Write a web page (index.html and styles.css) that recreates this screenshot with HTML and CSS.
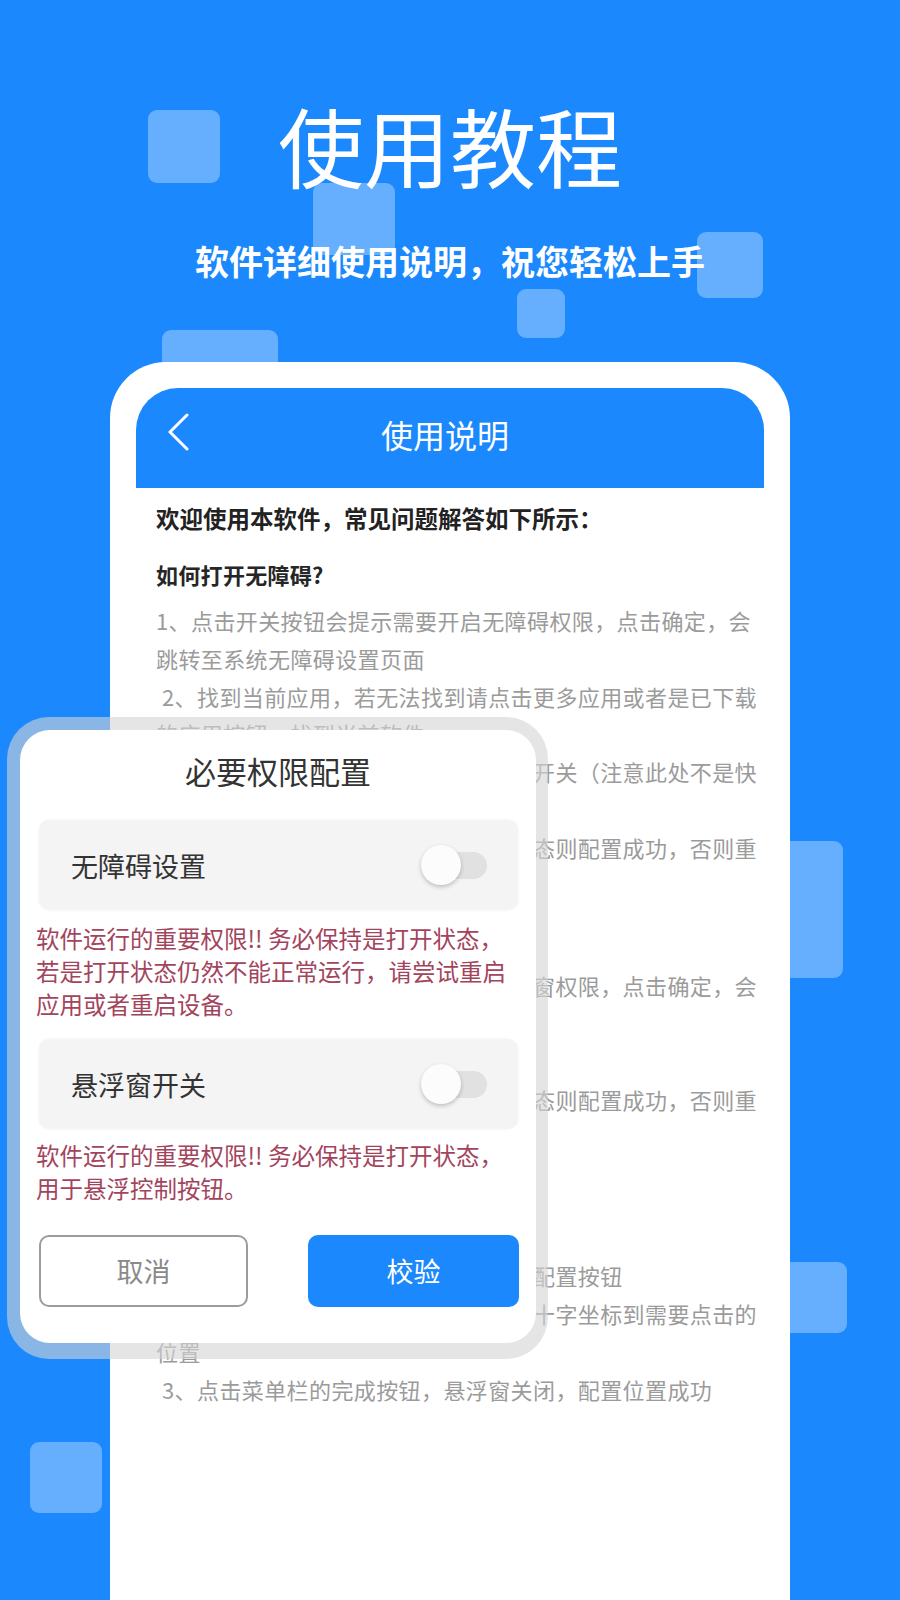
FILE: index.html
```html
<!DOCTYPE html>
<html lang="zh-CN">
<head>
<meta charset="utf-8">
<title>使用教程</title>
<link rel="stylesheet" href="styles.css">
</head>
<body>
<div class="page">
  <div class="deco d1"></div>
  <div class="deco d2"></div>
  <div class="deco d3"></div>
  <div class="deco d4"></div>
  <div class="deco d5"></div>
  <div class="deco d6"></div>
  <div class="deco d7"></div>
  <div class="deco d8"></div>

  <header class="hero">
    <h1 class="hero-title">使用教程</h1>
    <p class="hero-sub">软件详细使用说明，祝您轻松上手</p>
  </header>

  <section class="phone">
    <div class="bar">
      <svg class="back" viewBox="0 0 22 38" width="22" height="38" aria-hidden="true">
        <path d="M20 2 L3 19 L20 36" fill="none" stroke="#fff" stroke-width="3" stroke-linecap="round" stroke-linejoin="round"/>
      </svg>
      <h2 class="bar-title">使用说明</h2>
      <span></span>
    </div>
    <div class="doc">
      <p class="intro">欢迎使用本软件，常见问题解答如下所示：</p>

      <h3 class="q">如何打开无障碍?</h3>
      <p class="step first">1、点击开关按钮会提示需要开启无障碍权限，点击确定，会跳转至系统无障碍设置页面</p>
      <p class="step">2、找到当前应用，若无法找到请点击更多应用或者是已下载的应用按钮，找到当前软件</p>
      <p class="step">3、点击进入后，点击打开无障碍服务开关（注意此处不是快捷方式开关）</p>
      <p class="step">4、返回应用查看开关，如果是打开状态则配置成功，否则重新配置</p>

      <h3 class="q">如何打开悬浮窗?</h3>
      <p class="step">1、点击开关按钮会提示需要开启悬浮窗权限，点击确定，会跳转至系统悬浮窗设置页面</p>
      <p class="step">2、找到当前应用，打开开关</p>
      <p class="step">3、返回应用查看开关，如果是打开状态则配置成功，否则重新配置</p>
      <p class="step">4、若仍无法使用，请重启应用</p>

      <h3 class="q">如何配置点击位置?</h3>
      <p class="step">1、打开悬浮窗开关后，点击菜单栏的配置按钮</p>
      <p class="step">2、长按并拖动屏幕上出现的悬浮窗的十字坐标到需要点击的位置</p>
      <p class="step">3、点击菜单栏的完成按钮，悬浮窗关闭，配置位置成功</p>
    </div>
  </section>

  <div class="dialog">
    <div class="panel">
      <h2 class="dlg-title">必要权限配置</h2>

      <div class="perm">
        <span class="perm-name">无障碍设置</span>
        <span class="toggle"></span>
      </div>
      <p class="warn">软件运行的重要权限!! 务必保持是打开状态，若是打开状态仍然不能正常运行，请尝试重启应用或者重启设备。</p>

      <div class="perm perm-2">
        <span class="perm-name">悬浮窗开关</span>
        <span class="toggle"></span>
      </div>
      <p class="warn warn-2">软件运行的重要权限!! 务必保持是打开状态，用于悬浮控制按钮。</p>

      <div class="actions">
        <button class="btn btn-cancel" type="button">取消</button>
        <button class="btn btn-ok" type="button">校验</button>
      </div>
    </div>
  </div>
</div>
</body>
</html>
```

FILE: styles.css
```css
html, body {
  margin: 0;
  padding: 0;
}

.page {
  position: relative;
  width: 900px;
  height: 1600px;
  overflow: hidden;
  background: #1b89fd;
  font-family: "Noto Sans CJK SC", "Noto Sans", sans-serif;
}

/* decorative translucent squares */
.deco {
  position: absolute;
  background: #66aefe;
  border-radius: 9px;
}
.d1 { left: 148px; top: 110px; width: 72px; height: 73px; }
.d2 { left: 313px; top: 183px; width: 82px; height: 72px; }
.d3 { left: 697px; top: 232px; width: 66px; height: 66px; }
.d4 { left: 517px; top: 289px; width: 48px; height: 49px; }
.d5 { left: 162px; top: 330px; width: 116px; height: 60px; }
.d6 { left: 760px; top: 841px; width: 83px; height: 137px; }
.d7 { left: 760px; top: 1262px; width: 87px; height: 71px; }
.d8 { left: 30px; top: 1442px; width: 72px; height: 71px; }

/* hero */
.hero {
  position: relative;
  z-index: 1;
  padding-top: 95px;
  text-align: center;
  color: #fff;
}
.hero-title {
  margin: 0;
  font-size: 86px;
  line-height: 100px;
  font-weight: 400;
}
.hero-sub {
  margin: 44px 0 0;
  font-size: 34px;
  line-height: 44px;
  font-weight: 700;
}

/* phone card */
.phone {
  position: relative;
  z-index: 1;
  box-sizing: border-box;
  width: 680px;
  min-height: 1300px;
  margin: 79px 0 0 110px;
  padding: 26px 26px 0;
  background: #fff;
  border-radius: 56px 56px 0 0;
}

.bar {
  height: 100px;
  display: grid;
  grid-template-columns: 52px 1fr 62px;
  align-items: center;
  background: #1b89fd;
  border-radius: 42px 42px 0 0;
}
.back {
  align-self: start;
  margin: 25px 0 0 31px;
}
.bar-title {
  margin: 0;
  padding-bottom: 8px;
  text-align: center;
  font-size: 32px;
  line-height: 40px;
  font-weight: 400;
  color: #fff;
}

.doc {
  padding: 11px 0 0 20px;
  width: 608px;
}
.intro {
  margin: 0 0 18px;
  font-size: 23.5px;
  line-height: 38px;
  font-weight: 700;
  color: #222;
}
.q {
  margin: 16px 0 9px;
  font-size: 22px;
  letter-spacing: 0.3px;
  line-height: 38px;
  font-weight: 700;
  color: #262626;
}
.step {
  margin: 0;
  font-size: 22px;
  letter-spacing: 0.4px;
  line-height: 37.8px;
  color: #9b9b9b;
  text-indent: 6px;
}
.step.first {
  text-indent: 0;
}

/* permission dialog overlay */
.dialog {
  position: absolute;
  z-index: 2;
  left: 7px;
  top: 717px;
  width: 541px;
  box-sizing: border-box;
  padding: 13px 12px 16px 13px;
  border-radius: 42px;
  background: rgba(212, 212, 212, 0.6);
}
.panel {
  padding: 21px 0 36px;
  background: #fff;
  border-radius: 30px;
}
.dlg-title {
  margin: 0;
  text-align: center;
  font-size: 31px;
  line-height: 40px;
  font-weight: 400;
  color: #333;
}

.perm {
  height: 90px;
  margin: 29px 18px 0 19px;
  padding: 0 31px 0 32px;
  display: flex;
  align-items: center;
  justify-content: space-between;
  background: #f4f4f4;
  border-radius: 10px;
  box-shadow: 0 0 3px rgba(0, 0, 0, 0.06);
}
.perm-2 {
  margin-top: 18px;
}
.perm-name {
  font-size: 27px;
  color: #333;
}

.toggle {
  position: relative;
  width: 66px;
  height: 40px;
}
.toggle::before {
  content: "";
  position: absolute;
  right: 0;
  top: 7px;
  width: 46px;
  height: 27px;
  border-radius: 14px;
  background: #e1e1e1;
}
.toggle::after {
  content: "";
  position: absolute;
  left: 0;
  top: 0;
  width: 40px;
  height: 40px;
  border-radius: 50%;
  background: #fcfcfc;
  box-shadow: 0 2px 4px rgba(0, 0, 0, 0.22);
}

.warn {
  width: 480px;
  margin: 12px 0 0 16px;
  font-size: 23.5px;
  line-height: 33px;
  color: #a3445d;
}
.warn-2 {
  margin-top: 10px;
}

.actions {
  display: flex;
  justify-content: space-between;
  margin: 29.5px 17px 0 19px;
}
.btn {
  height: 72px;
  box-sizing: border-box;
  border-radius: 10px;
  font-family: inherit;
  font-size: 27px;
  display: flex;
  align-items: center;
  justify-content: center;
  padding: 0;
}
.btn-cancel {
  width: 209px;
  border: 2px solid #9c9c9c;
  background: #fff;
  color: #8a8a8a;
}
.btn-ok {
  width: 211px;
  border: 0;
  background: #1b89fd;
  color: #fff;
}
```
